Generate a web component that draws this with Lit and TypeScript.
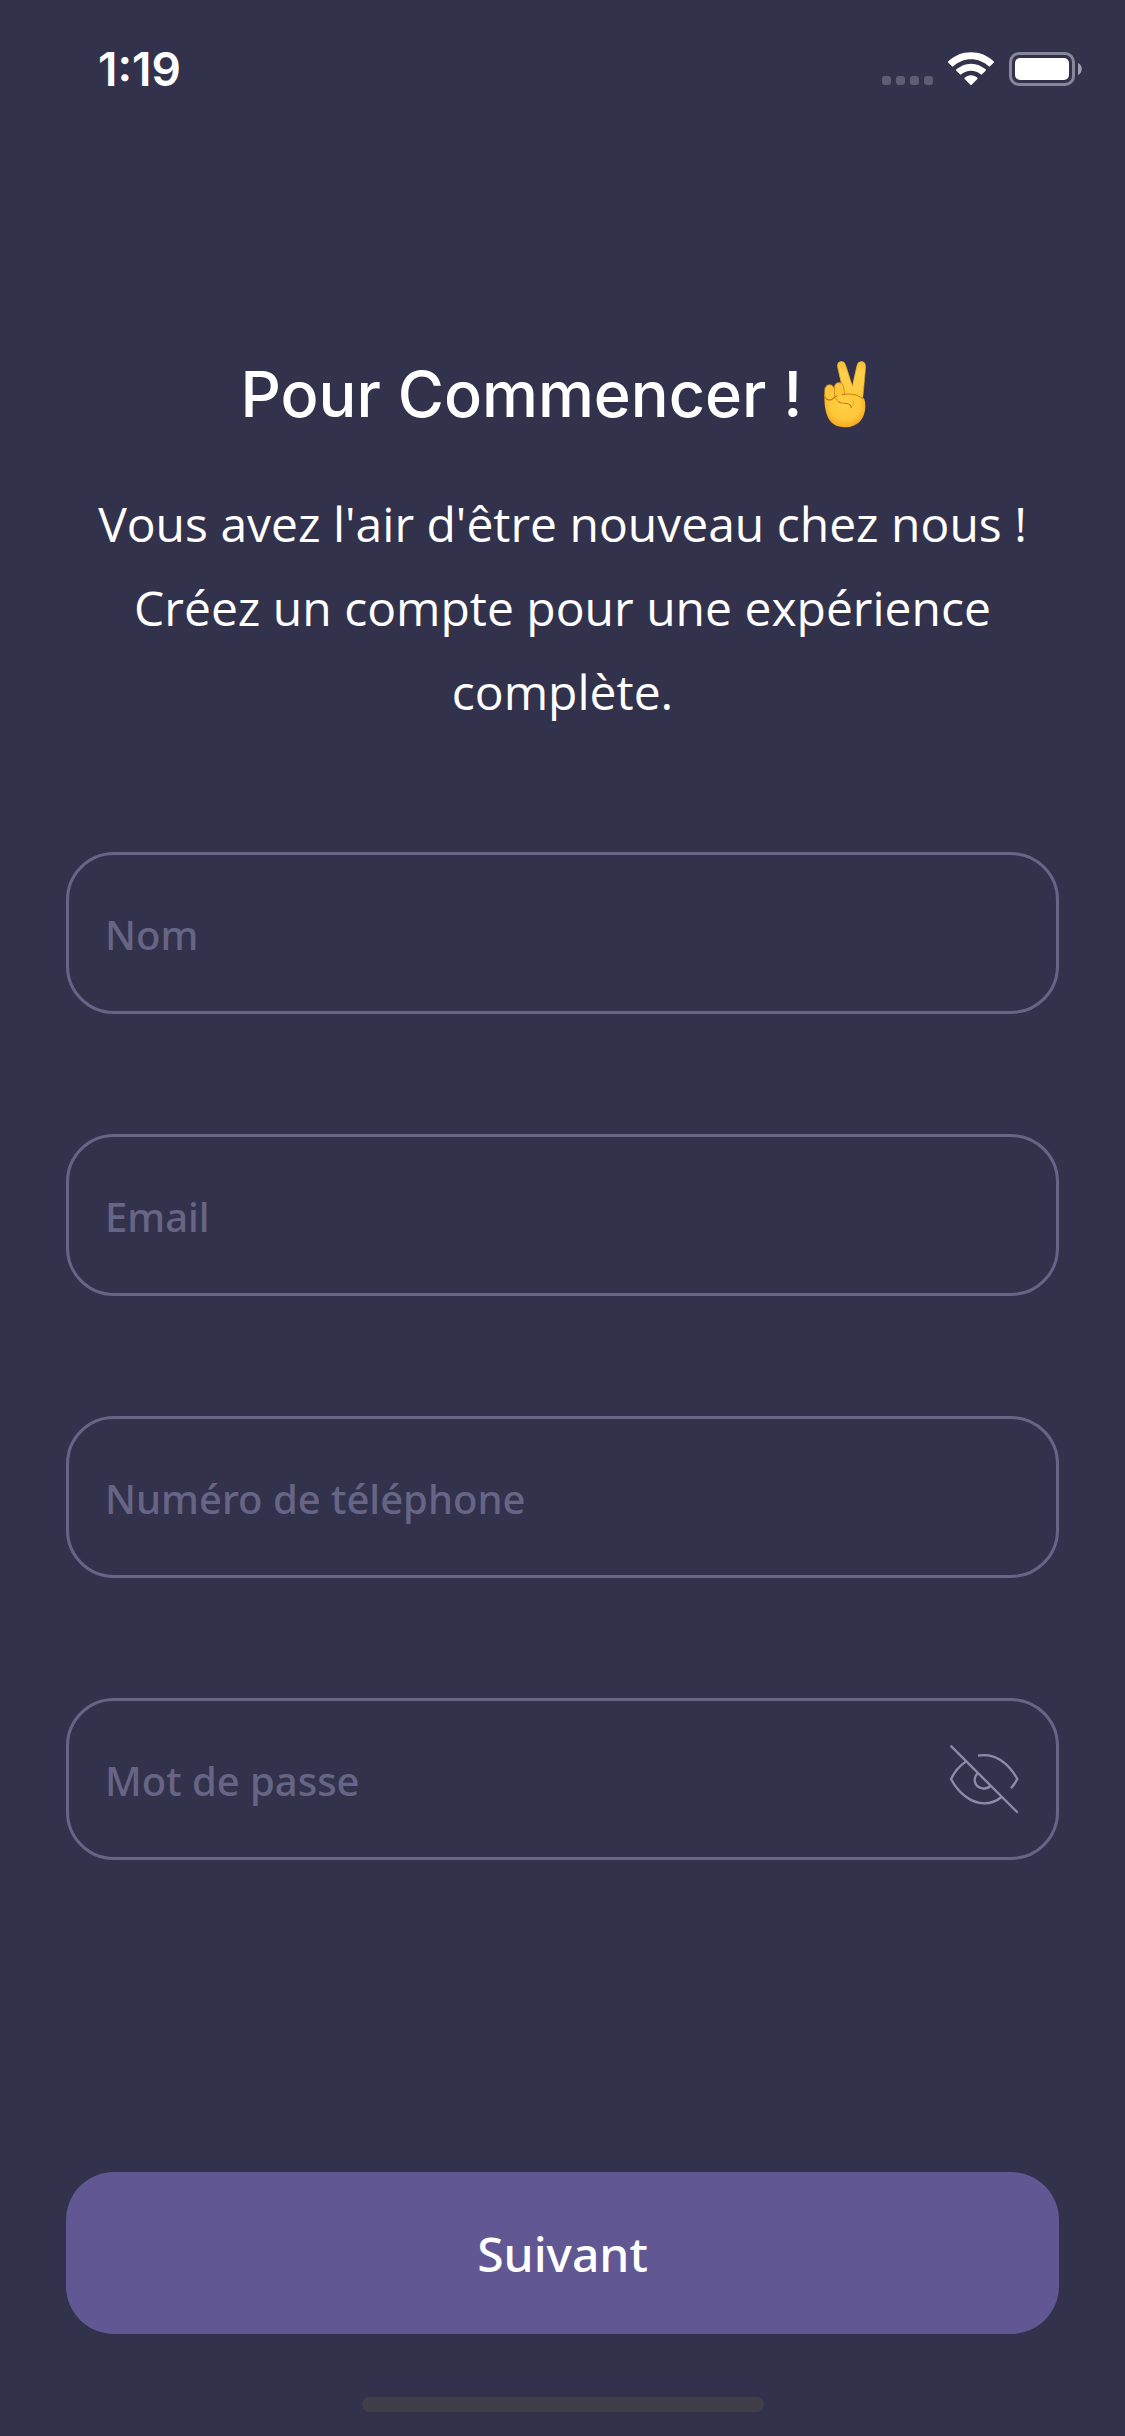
import { LitElement, html, css, svg } from "lit";
import { customElement, property, state } from "lit/decorators.js";

const signalDots = [0, 14, 28, 42];

@customElement("status-bar")
class StatusBar extends LitElement {
  static styles = css`
    :host { display: block; }
    .bar {
      display: flex;
      justify-content: space-between;
      align-items: center;
      height: 138px;
      padding: 0 42px 0 98px;
      box-sizing: border-box;
    }
    .time {
      font: 600 46px/48px Inter, sans-serif;
      color: #fff;
    }
    .icons { display: flex; align-items: center; gap: 15px; }
    .icons svg { display: block; }
  `;

  render() {
    return html`
      <div class="bar">
        <time class="time">1:19</time>
        <div class="icons">
          <svg width="51" height="34" viewBox="0 0 51 34" fill="#5f5d74" aria-hidden="true">
            ${signalDots.map((x) => svg`<rect x=${x} y="24" width="9" height="9" rx="3" />`)}
          </svg>
          <svg width="46" height="34" viewBox="0 0 138 102" fill="#fff" aria-hidden="true">
            <path d="M69 1C43 1 19 11 1 28q-2 2 0 4l11 11q2 2 4 0C30 30 49 22 69 22s39 8 53 21q2 2 4 0l11-11q2-2 0-4C119 11 95 1 69 1Z" />
            <path d="M69 35C52 35 37 42 25 52q-2 2 0 4l11 11q2 2 4 0c8-7 18-11 29-11s21 4 29 11q2 2 4 0l11-11q2-2 0-4C101 42 86 35 69 35Z" />
            <path d="M69 70c-7 0-14 3-19 7q-2 2 0 4l17 17q2 2 4 0l17-17q2-2 0-4c-5-4-12-7-19-7Z" />
          </svg>
          <svg width="74" height="34" viewBox="0 0 74 34" aria-hidden="true">
            <rect x="1.5" y="1.5" width="63" height="31" rx="8.5" fill="none" stroke="#87869a" stroke-width="3" />
            <rect x="6" y="6" width="54" height="22" rx="5" fill="#fff" />
            <path d="M69 11c5 2 5 10 0 12Z" fill="#a09fae" />
          </svg>
        </div>
      </div>
    `;
  }
}

@customElement("text-field")
class TextField extends LitElement {
  @property() label = "";
  @property() type = "text";
  @property() name = "";
  @state() private revealed = false;

  static styles = css`
    :host { display: block; }
    .field {
      display: flex;
      align-items: center;
      height: 162px;
      padding: 0 36px;
      box-sizing: border-box;
      border: 3px solid #676586;
      border-radius: 48px;
    }
    .input {
      flex: 1;
      min-width: 0;
      padding: 4px 0 0;
      border: 0;
      outline: 0;
      background: none;
      color: #fff;
      font: 500 40px/60px "Noto Sans", sans-serif;
    }
    .input::placeholder { color: #676586; opacity: 1; }
    .toggle {
      display: block;
      padding: 0;
      border: 0;
      background: none;
      cursor: pointer;
    }
    .toggle svg { display: block; }
  `;

  render() {
    const secret = this.type === "password";
    const type = secret && this.revealed ? "text" : this.type;
    return html`
      <div class="field">
        <input class="input" type=${type} name=${this.name} placeholder=${this.label} aria-label=${this.label} />
        ${secret
          ? html`<button
              class="toggle"
              type="button"
              aria-label="Afficher le mot de passe"
              aria-pressed=${this.revealed ? "true" : "false"}
              @click=${() => (this.revealed = !this.revealed)}
            >
              <svg width="72" height="72" viewBox="84 189 216 216" fill="none" stroke="#8d8bac" stroke-width="7" stroke-linejoin="round" aria-hidden="true">
                <path d="M94 199 291 396" stroke-linecap="round" />
                <path d="M138 244C118 258 103 276 93 297c23 43 60 73 100 73 19 0 37-7 52-19" />
                <path d="M174 227c51-10 92 24 118 70q-8 15-19 28" />
                <path d="M173 279c-8 9-11 20-7 30 7 18 33 22 46 8" />
              </svg>
            </button>`
          : null}
      </div>
    `;
  }
}

const fields = [
  { label: "Nom", type: "text", name: "name" },
  { label: "Email", type: "email", name: "email" },
  { label: "Numéro de téléphone", type: "tel", name: "phone" },
  { label: "Mot de passe", type: "password", name: "password" },
];

@customElement("app-root")
class AppRoot extends LitElement {
  static styles = css`
    :host { display: block; }
    .screen {
      display: flex;
      flex-direction: column;
      min-height: 100vh;
      box-sizing: border-box;
      padding-bottom: 24px;
      background: #33324c;
      color: #fff;
      font-family: "Open Sans", sans-serif;
    }
    .form {
      flex: 1;
      display: flex;
      flex-direction: column;
      padding: 216px 66px 63px;
    }
    .title {
      display: flex;
      justify-content: center;
      align-items: center;
      gap: 22px;
      margin: 0;
      padding-right: 18px;
      font: 500 63px/80px Inter, sans-serif;
    }
    .victory { display: block; }
    .intro {
      margin: 48px 0 0;
      text-align: center;
      font-size: 48px;
      line-height: 84px;
    }
    .fields {
      display: grid;
      gap: 120px;
      margin-top: 118px;
    }
    .next {
      margin-top: auto;
      height: 162px;
      padding: 2px 0 0;
      border: 0;
      border-radius: 48px;
      background: #615793;
      color: #fff;
      font: 500 48px/60px "Noto Sans", sans-serif;
      cursor: pointer;
    }
    .home {
      align-self: center;
      width: 402px;
      height: 15px;
      border-radius: 8px;
      background: #403f49;
    }
  `;

  render() {
    return html`
      <div class="screen">
        <status-bar></status-bar>
        <form class="form" @submit=${(e: Event) => e.preventDefault()}>
          <h1 class="title">
            <span>Pour Commencer !</span>
            <svg class="victory" width="42" height="68" viewBox="97 58 126 202" role="img" aria-label="✌️">
              <defs>
                <radialGradient id="skin" cx="160" cy="190" r="82" gradientUnits="userSpaceOnUse">
                  <stop offset="0" stop-color="#ffd044" />
                  <stop offset=".55" stop-color="#fec83a" />
                  <stop offset=".85" stop-color="#f3a91f" />
                  <stop offset="1" stop-color="#dc8710" />
                </radialGradient>
                <linearGradient id="finger" x1="0" y1="60" x2="0" y2="180" gradientUnits="userSpaceOnUse">
                  <stop offset="0" stop-color="#fbbd32" />
                  <stop offset=".3" stop-color="#ffd04c" />
                  <stop offset="1" stop-color="#ffc737" />
                </linearGradient>
              </defs>
              <path d="M137 76c-3-17 20-22 25-5l20 63 14-62c4-17 28-14 26 4l-9 98-54 2Z" fill="url(#finger)" />
              <path d="M138 78 158 158M161 71l21 65 14-62M222 77l-8 88" fill="none" stroke="#e5a126" stroke-width="2" />
              <path d="M98 160c0 50 7 99 63 99 35 0 60-24 60-64 0-20-3-26-20-31-20-6-60-3-75-4Z" fill="url(#skin)" />
              <path d="M128 140c0-20 27-20 28-1l3 22c-3 15-20 20-30 10Z" fill="#fdc33a" stroke="#c77f12" stroke-width="2" />
              <path d="M99 149c0-24 29-23 30-1v15c-1 18-28 18-30 0Z" fill="#ffc53a" stroke="#c77f12" stroke-width="2" />
              <path d="M100 168c5 12 22 12 28 1l9-5" fill="none" stroke="#b9690d" stroke-width="3" />
              <path d="M150 161c22-4 49-2 64 13" fill="none" stroke="#c8810f" stroke-width="3" />
              <path d="M137 175c0 12 12 13 24 13 12 1 17 5 16 14 13-7 13-28-7-31Z" fill="#a95f0b" />
              <path d="M148 163c-15 0-15 21 2 22 16 1 28 1 31 15 12-14 2-35-33-37Z" fill="#ffcc40" />
            </svg>
          </h1>
          <p class="intro">
            Vous avez l'air d'être nouveau chez nous ! Créez un compte pour une expérience complète.
          </p>
          <div class="fields">
            ${fields.map(
              (f) => html`<text-field .label=${f.label} .type=${f.type} .name=${f.name}></text-field>`
            )}
          </div>
          <button class="next" type="submit">Suivant</button>
        </form>
        <div class="home"></div>
      </div>
    `;
  }
}
